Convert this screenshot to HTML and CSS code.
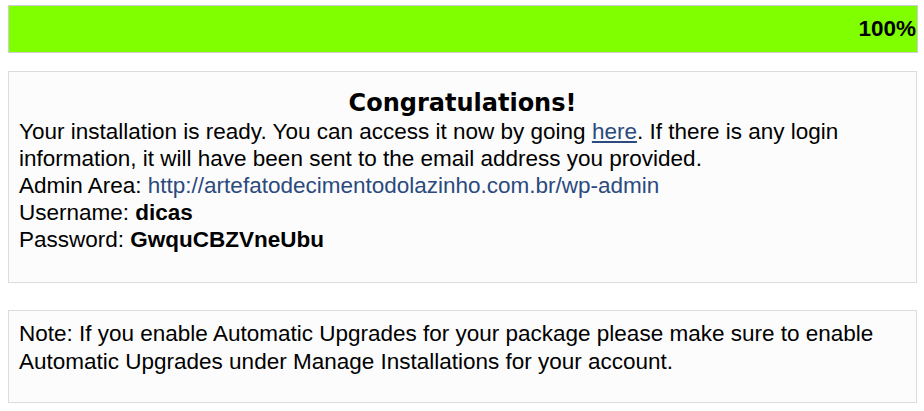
FILE: index.html
```html
<!DOCTYPE html>
<html lang="en">
<head>
  <title>Installation Complete</title>
  <link rel="stylesheet" href="styles.css">
</head>
<body>
  <div class="progress">
    <div class="progress-bar">100%</div>
  </div>

  <div class="panel panel-done">
    <h2>Congratulations!</h2>
    Your installation is ready. You can access it now by going <a href="#" class="here">here</a>. If there is any login information, it will have been sent to the email address you provided.<br>
    Admin Area: <a href="#" class="admin-link">http://artefatodecimentodolazinho.com.br/wp-admin</a><br>
    Username: <b>dicas</b><br>
    Password: <b>GwquCBZVneUbu</b>
  </div>

  <div class="panel panel-note">
    Note: If you enable Automatic Upgrades for your package please make sure to enable Automatic Upgrades under Manage Installations for your account.
  </div>
</body>
</html>
```

FILE: styles.css
```css
body {
  font-family: 'Liberation Sans', Arial, sans-serif;
  font-size: 22.5px;
  margin: 5px 0 0 8px;
  background: #ffffff;
  color: #000;
}

.progress {
  width: 908px;
  height: 46px;
  border: 1px solid #cfcfcf;
  background: #80ff00;
}

.progress-bar {
  height: 46px;
  line-height: 46px;
  text-align: right;
  font-weight: bold;
  padding-right: 1px;
}

.panel {
  width: 887px;
  border: 1px solid #dcdcdc;
  background: #fcfcfc;
  padding: 16px 10px 29px 10px;
  line-height: 27px;
}

.panel-done {
  margin-top: 18px;
}

.panel-done h2 {
  font-family: 'DejaVu Sans', Verdana, sans-serif;
  font-size: 24px;
  line-height: 30px;
  text-align: center;
  margin: 0;
}

.panel-note {
  margin-top: 27px;
  padding-top: 9px;
  padding-bottom: 26px;
  line-height: 28px;
}

a {
  color: #2b4a7e;
  text-decoration: none;
}

a.here {
  text-decoration: underline;
}
```
